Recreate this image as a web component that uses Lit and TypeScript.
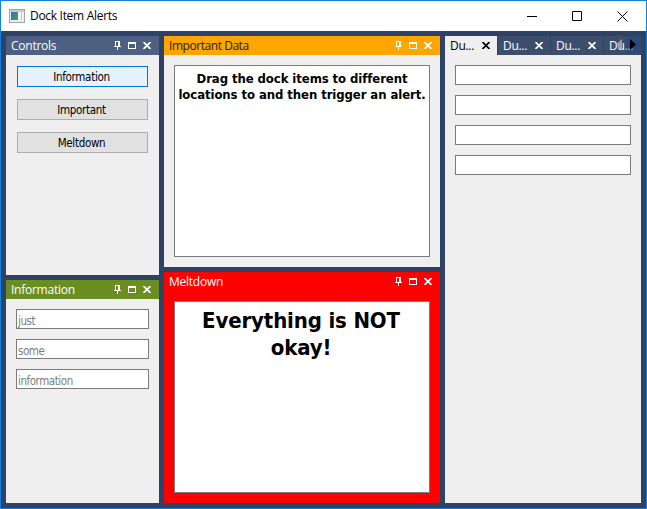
import { LitElement, html, css, nothing } from "lit";
import { customElement, property } from "lit/decorators.js";

const cross = html`<svg width="8" height="7" viewBox="0 0 8 7" fill="none" stroke="currentColor" stroke-width="1.8"><path d="M.4 0 7.6 7M7.6 0 .4 7"/></svg>`;

@customElement("dock-panel")
class DockPanel extends LitElement {
  @property() heading = "";
  static styles = css`
    :host { display: flex; flex-direction: column; background: #efefef; min-height: 0; }
    header { display: flex; align-items: flex-start; height: 19px; flex: none; box-sizing: border-box;
      padding: 0 8px 0 5px; background: var(--bar, #4d6082); color: var(--ink, #fff); }
    .title { flex: 1; font: 12px/19px "Open Sans", "Noto Sans", sans-serif; letter-spacing: var(--track, -0.25px); white-space: nowrap; }
    .tools { display: flex; color: #fff; padding-top: 5px; }
    svg { display: block; }
    .pin { margin-right: 7px; }
    .box { margin: 1px 7px 0 0; }
    .close { margin-top: 1px; }
    .body { flex: 1; min-height: 0; display: flex; flex-direction: column; }
  `;
  render() {
    return html`<header><div class="title">${this.heading}</div>
      <div class="tools">
        <div class="pin"><svg width="7" height="9" fill="currentColor" shape-rendering="crispEdges"><path d="M1 0h5v5h1v1H4v3H3V6H0V5h1zM2 1v4h2V1z" fill-rule="evenodd"/></svg></div>
        <div class="box"><svg width="8" height="7" fill="currentColor" shape-rendering="crispEdges"><path d="M0 0h8v7H0zM1 2v4h6V2z" fill-rule="evenodd"/></svg></div>
        <div class="close">${cross}</div>
      </div></header>
      <div class="body"><slot></slot></div>`;
  }
}

@customElement("app-root")
class AppRoot extends LitElement {
  static styles = css`
    :host { display: flex; flex-direction: column; width: 647px; height: 509px; box-sizing: border-box;
      border: 1px solid #1080d8; background: #2f4263; overflow: hidden;
      font: 11px "DejaVu Sans Condensed", "DejaVu Sans", sans-serif; }
    svg { display: block; }
    .titlebar { height: 30px; flex: none; background: #fff; display: flex; align-items: center; padding: 0 18px 0 8px; color: #000; }
    .name { flex: 1; margin-left: 5px; font: 12px/30px "Open Sans", "Noto Sans", sans-serif; letter-spacing: -0.3px; }
    .controls { display: flex; align-items: center; }
    .min { margin-right: 35px; }
    .max { margin-right: 35px; }
    .docks { flex: 1; min-height: 0; display: grid; grid-template-columns: 153px 276px 196px; gap: 5px; padding: 5px; }
    .col { display: flex; flex-direction: column; gap: 5px; min-height: 0; }
    .controls-dock { height: 239px; }
    .info { flex: 1; --bar: #6b8e23; }
    .important { height: 231px; --bar: #ffa500; --ink: #222; --track: -0.45px; }
    .melt { flex: 1; --bar: #f00; background: #f00; }
    .buttons { display: flex; flex-direction: column; gap: 12px; padding: 11px 11px; }
    button { height: 21px; padding: 2px 2px 0 0; border: 1px solid #adadad; background: #e1e1e1; color: #000; font: inherit; font-size: 11.5px; line-height: 17px; letter-spacing: -0.3px; }
    button.active { border-color: #0078d7; background: #e5f1fb; }
    .fields { display: flex; flex-direction: column; gap: 10px; padding: 10px; }
    .field { height: 20px; box-sizing: border-box; border: 1px solid #7a7a7a; background: #fff; color: #808080; padding: 1px 0 0 1px; font-size: 11.5px; line-height: 20px; letter-spacing: -0.45px; }
    .text { flex: 1; margin: 10px; box-sizing: border-box; border: 1px solid #7a7a7a; background: #fff; color: #000; text-align: center; font-weight: bold; white-space: nowrap; }
    .note { font-size: 13px; line-height: 16px; padding-top: 5px; letter-spacing: -0.08px; }
    .alarm { font-size: 22px; line-height: 27px; padding: 5px 2px 0 0; letter-spacing: -0.15px; }
    .right { background: #efefef; display: flex; flex-direction: column; }
    .tabs { position: relative; display: flex; gap: 1px; height: 19px; overflow: hidden; background: #2f4263; }
    .tab { flex: none; width: 52px; display: flex; background: #3d4e6d; color: #fff; box-sizing: border-box; padding: 0 7px 0 5px; justify-content: space-between; font: 12px/19px "Open Sans", "Noto Sans", sans-serif; letter-spacing: -0.3px; }
    .tab.active { background: #efefef; color: #000; }
    .tab svg { margin-top: 6px; }
    .scroll { position: absolute; right: 0; top: 0; display: flex; height: 19px; }
    .prev { width: 9px; padding-top: 3px; }
    .next { width: 16px; box-sizing: border-box; padding: 3px 0 0 5px; background: rgba(20, 72, 140, 0.4); height: 18px; }
  `;
  render() {
    return html`
      <div class="titlebar">
        <svg width="16" height="14" viewBox="0 0 16 14"><defs><linearGradient id="g" x2="1" y2="1"><stop stop-color="#3c6ea8"/><stop offset="1" stop-color="#44a45e"/></linearGradient></defs>
          <path fill="#a0a5aa" d="M0 0h16v14H0z"/><path fill="#e9edf0" d="M1 1h14v12H1z"/><path fill="#c5ccd2" d="M1 1h14v2H1z"/><path fill="url(#g)" d="M2 3h7v8H2z"/><path fill="#fff" d="M10 3h2v8h-2zM13 3h1v8h-1z"/><path fill="#b4bdc4" d="M12 3h1v8h-1z"/></svg>
        <div class="name">Dock Item Alerts</div>
        <div class="controls">
          <svg class="min" width="10" height="1"><path d="M0 0h10v1H0z"/></svg>
          <svg class="max" width="10" height="10"><path d="M.5.5h9v9h-9z" fill="none" stroke="#000"/></svg>
          <svg width="11" height="11"><path d="m.5.5 10 10m0-10-10 10" stroke="#000"/></svg>
        </div>
      </div>
      <div class="docks">
        <div class="col">
          <dock-panel class="controls-dock" heading="Controls">
            <div class="buttons">${["Information", "Important", "Meltdown"].map((t, i) => html`<button class=${i ? "" : "active"}>${t}</button>`)}</div>
          </dock-panel>
          <dock-panel class="info" heading="Information">
            <div class="fields">${["just", "some", "information"].map((t) => html`<div class="field">${t}</div>`)}</div>
          </dock-panel>
        </div>
        <div class="col">
          <dock-panel class="important" heading="Important Data"><div class="text note">Drag the dock items to different<br>locations to and then trigger an alert.</div></dock-panel>
          <dock-panel class="melt" heading="Meltdown"><div class="text alarm">Everything is NOT<br>okay!</div></dock-panel>
        </div>
        <div class="right">
          <div class="tabs">
            ${[0, 1, 2, 3].map((i) => html`<div class="tab ${i ? "" : "active"}"><span>Du...</span>${i < 3 ? cross : nothing}</div>`)}
            <div class="scroll">
              <div class="prev"><svg width="6" height="11"><path d="M6 0v11L0 5.5z" fill="#a0a0a0"/></svg></div>
              <div class="next"><svg width="6" height="11"><path d="M0 0v11l6-5.5z"/></svg></div>
            </div>
          </div>
          <div class="fields">${[0, 1, 2, 3].map(() => html`<div class="field"></div>`)}</div>
        </div>
      </div>`;
  }
}
